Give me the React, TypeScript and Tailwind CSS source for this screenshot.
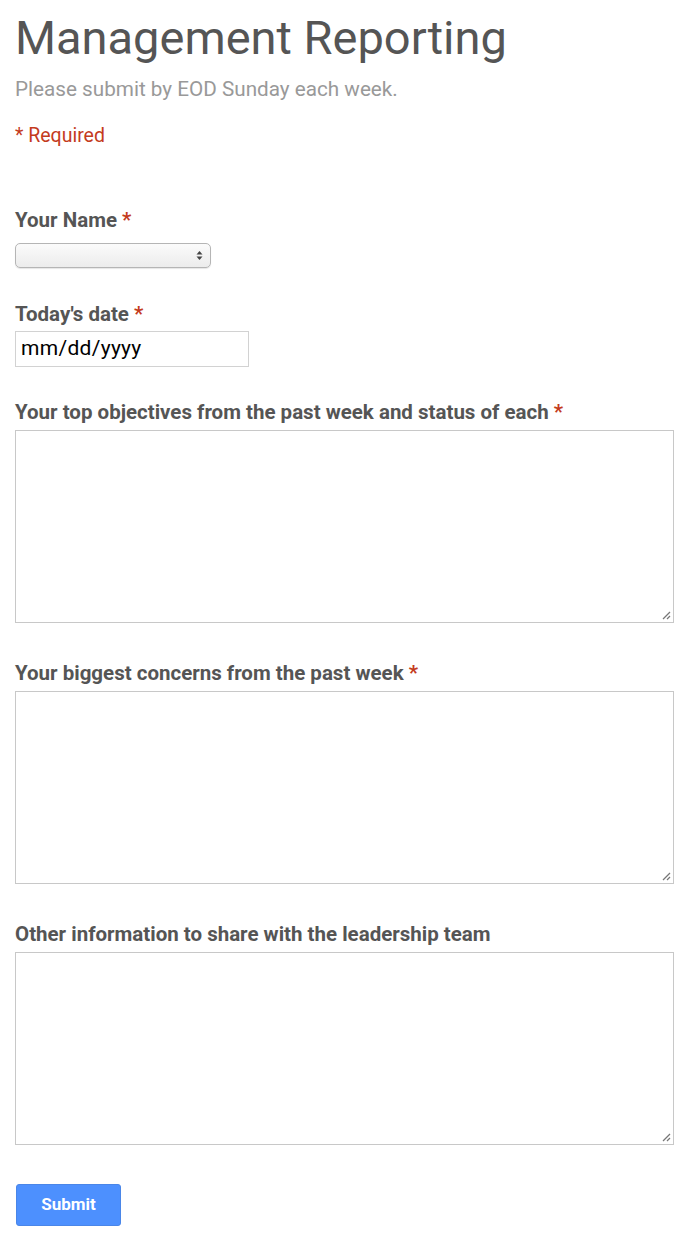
import React from "react";

const Star = () => <span className="text-[#c43b1d]"> *</span>;

function Area({ label, req }: { label: string; req?: boolean }) {
  return (
    <div className="flex flex-col">
      <div className="text-[20.5px] font-bold text-[#555] leading-[24px]">
        {label}
        {req && <Star />}
      </div>
      <div className="relative mt-[6px] h-[193px] w-[659px] border border-[#c8c8c8] bg-white">
        <svg className="absolute right-[2px] bottom-[2px]" width="10" height="10" viewBox="0 0 10 10">
          <line x1="9" y1="2" x2="2" y2="9" stroke="#777" strokeWidth="1.2" />
          <line x1="9" y1="6" x2="6" y2="9" stroke="#777" strokeWidth="1.2" />
        </svg>
      </div>
    </div>
  );
}

export default function App() {
  return (
    <div className="w-[700px] h-[1235px] bg-white px-[15px] font-['Roboto',sans-serif]">
      <h1 className="pt-[10px] text-[47px] leading-[56px] text-[#555]">Management Reporting</h1>
      <p className="mt-[11px] text-[20.7px] leading-[24px] text-[#999]">Please submit by EOD Sunday each week.</p>
      <p className="mt-[23px] text-[19.5px] leading-[24px] text-[#c43b1d]">* Required</p>

      <div className="mt-[60px] text-[20.5px] font-bold text-[#555] leading-[24px]">
        Your Name<Star />
      </div>
      <div className="mt-[11px] flex h-[25px] w-[196px] items-center justify-end rounded-[5px] border border-[#b5b5b5] bg-gradient-to-b from-[#fbfbfb] to-[#ececec] pr-[7px] shadow-[0_1px_1px_rgba(0,0,0,0.1)]">
        <svg width="7" height="11" viewBox="0 0 7 11">
          <path d="M3.5 1 L6.5 4.5 H0.5 Z" fill="#444" />
          <path d="M3.5 10 L6.5 6.5 H0.5 Z" fill="#444" />
        </svg>
      </div>

      <div className="mt-[34px] text-[20.5px] font-bold text-[#555] leading-[24px]">
        Today's date<Star />
      </div>
      <div className="mt-[5px] flex h-[36px] w-[234px] items-center border border-[#d2d2d2] pl-[5px] text-[21px] text-black tracking-[0.3px]">
        mm/dd/yyyy
      </div>

      <div className="mt-[33px] flex flex-col gap-[38px]">
        <Area label="Your top objectives from the past week and status of each" req />
        <Area label="Your biggest concerns from the past week" req />
        <Area label="Other information to share with the leadership team" />
      </div>

      <button className="mt-[39px] ml-[1px] h-[42px] w-[105px] rounded-[3px] border border-[#4a86e8] bg-[#4d90fe] text-[17px] font-bold text-white">
        Submit
      </button>
    </div>
  );
}
